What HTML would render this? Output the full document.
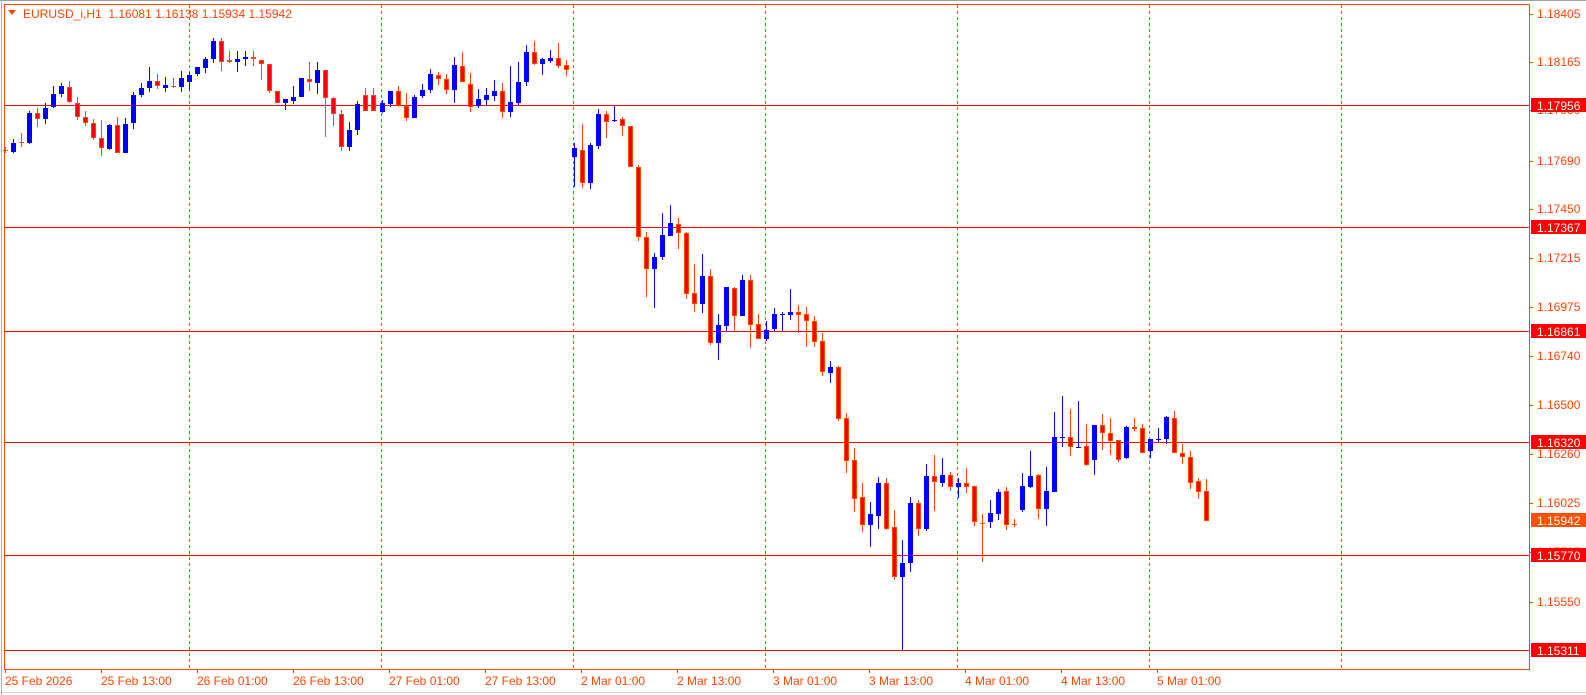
<!DOCTYPE html>
<html><head><meta charset="utf-8">
<style>
html,body{margin:0;padding:0;background:#fff;}
body{width:1586px;height:695px;overflow:hidden;position:relative;font-family:"Liberation Sans",sans-serif;}
svg{position:absolute;left:0;top:0;}
</style></head>
<body>
<svg id="c" width="1586" height="695" xmlns="http://www.w3.org/2000/svg" font-family="Liberation Sans, sans-serif" font-size="12">
<rect x="0" y="0" width="1586" height="695" fill="#fff"/>
<line x1="0" y1="0.5" x2="1586" y2="0.5" stroke="#a0a0a0"/>
<line x1="1.5" y1="0" x2="1.5" y2="695" stroke="#b0b0b0"/>
<line x1="0" y1="692.5" x2="1586" y2="692.5" stroke="#d8d8d8"/>
<g id="grid" stroke="#ff4500" stroke-dasharray="3,3"></g>
<g id="hl" stroke="#ff0000"></g>
<g id="cd"></g>
<rect x="4.5" y="4.5" width="1525" height="665" fill="none" stroke="#ff4500"/>
<g id="ax" fill="#ff4500"></g>
<path d="M8 10 L16 10 L12 15 Z" fill="#ff4500"/>
<text x="23" y="18" fill="#ff4500">EURUSD_i,H1&#160;&#160;1.16081 1.16138 1.15934 1.15942</text>
</svg>
<script>
var NS="http://www.w3.org/2000/svg";
function el(p,t,a,txt){var e=document.createElementNS(NS,t);for(var k in a)e.setAttribute(k,a[k]);if(txt)e.textContent=txt;p.appendChild(e);return e;}
var g=document.getElementById('grid');
[189,381,573,765,957,1149,1341].forEach(function(x){el(g,'line',{x1:x+.5,y1:5,x2:x+.5,y2:669});});
var hl=document.getElementById('hl');
[105,227,331,442,555,650].forEach(function(y){el(hl,'line',{x1:5,y1:y+.5,x2:1529,y2:y+.5});});
var ax=document.getElementById('ax');
var ticks=[["1.18405",14],["1.18165",62],["1.17930",110],["1.17690",161],["1.17450",209],["1.17215",258],["1.16975",307],["1.16740",356],["1.16500",405],["1.16260",454],["1.16025",503],["1.15785",552],["1.15550",602]];
ticks.forEach(function(t){el(ax,'rect',{x:1530,y:t[1],width:3,height:1});el(ax,'text',{x:1537,y:t[1]+4},t[0]);});
var boxes=[["1.17956",105,"#ff0000"],["1.17367",227,"#ff0000"],["1.16861",331,"#ff0000"],["1.16320",442,"#ff0000"],["1.15942",520,"#ff5000"],["1.15770",555,"#ff0000"],["1.15311",650,"#ff0000"]];
boxes.forEach(function(b){el(ax,'rect',{x:1531,y:b[1]-7,width:55,height:14,fill:b[2]});el(ax,'text',{x:1537,y:b[1]+5,fill:'#fff'},b[0]);});
var dates=["25 Feb 2026","25 Feb 13:00","26 Feb 01:00","26 Feb 13:00","27 Feb 01:00","27 Feb 13:00","2 Mar 01:00","2 Mar 13:00","3 Mar 01:00","3 Mar 13:00","4 Mar 01:00","4 Mar 13:00","5 Mar 01:00"];
dates.forEach(function(d,i){var x=5+96*i;el(ax,'rect',{x:x,y:670,width:1,height:3});el(ax,'text',{x:x,y:685},d);});
var z1=[["O",150,150,147,153],["B",143,152,139,153],["O",142,142,133,147],["B",113,143,111,144],["O",113,119,108,127],["B",108,119,103,124],["B",94,107,86,108],["B",86,94,83,97],["O",87,102,81,103],["O",103,117,97,120],["O",117,123,111,126],["O",123,138,119,140],["O",138,148,120,156],["B",125,149,124,150],["O",125,153,117,153],["B",124,153,118,153],["B",95,123,92,129],["B",88,95,83,97],["B",81,88,67,92],["O",81,86,74,89],["B",85,88,77,92],["O",86,86,78,88],["B",78,87,71,92],["B",75,82,72,90],["B",67,74,67,76],["B",59,68,57,73],["B",41,59,38,63],["O",41,62,38,71],["O",60,62,51,63],["B",59,62,51,72],["B",57,59,51,66],["O",57,59,51,66],["O",60,64,60,80],["O",64,91,64,93],["O",91,103,91,103],["B",99,103,99,110],["B",97,101,86,104],["B",78,97,78,97],["O",79,82,62,91],["B",70,83,62,94],["O",70,98,70,137],["O",98,114,97,126],["O",114,147,110,151],["B",130,147,122,151],["B",104,130,101,135],["O",95,111,88,111],["O",95,111,88,111]];
var z4=[["B",103,112,100,113],["B",91,104,91,107],["O",91,106,86,107],["O",106,118,93,121],["B",97,118,95,118],["B",90,96,84,98],["B",74,90,69,93],["O",75,79,72,85],["O",79,90,74,94],["B",65,90,57,103],["O",66,82,52,82],["O",84,107,73,112],["B",99,106,89,108],["B",95,100,88,106],["B",91,96,80,101],["O",91,112,83,118],["B",102,112,66,117],["B",82,103,62,105],["B",52,82,45,86],["O",52,64,41,65],["B",59,64,58,75],["B",58,61,50,63],["O",58,66,43,68],["O",65,70,60,76],
["B",148,157,143,187],["O",150,183,124,188],["B",145,183,143,189],["B",114,146,109,149],["O",114,122,111,138],["B",120,120,106,122],["O",119,126,117,136],["O",126,167,126,167],["O",167,237,165,241],["O",237,269,232,297],["B",257,269,253,308],["B",235,257,213,260],["B",223,236,205,236],["O",224,233,218,249],["O",233,294,232,299],["O",293,304,264,312],["B",276,304,254,313],["O",276,343,269,345],["B",325,343,314,360],["B",287,326,287,331],["O",288,316,287,331],["B",280,316,275,316],["O",280,325,275,348],["O",324,339,314,339],["B",330,339,321,341],["B",314,329,308,331],["B",314,314,312,331],["B",312,315,289,320],["O",312,315,305,333],["O",314,321,307,347],["O",321,342,316,347]];
var z5=[["O",341,372,333,376],["B",367,373,361,383],["O",367,419,366,421],["O",418,461,413,473],["O",460,499,448,512],["O",497,525,483,532],["B",514,525,502,547],["B",483,516,477,529],["O",483,529,478,530],["O",527,577,510,580],["B",563,577,540,650],["B",503,563,497,572],["O",503,529,500,536],["B",476,529,464,531],["O",476,482,455,511],["B",475,483,458,487],["O",475,487,472,491],["B",483,487,478,498],["O",483,487,468,493],["O",486,522,486,526],["O",523,523,514,562],["B",513,522,500,528],["B",492,514,489,520],["O",491,525,487,530],["O",524,524,519,527],["B",486,510,473,512],["B",476,487,451,488],["O",475,509,474,519],["B",491,509,467,526],["B",437,492,412,492],["B",437,437,396,447],["O",437,447,409,456],["B",447,447,401,447],["O",446,465,424,466],["B",425,460,425,475],["O",425,433,414,450],["O",433,441,418,455],["O",440,460,440,462],["B",427,458,426,459],["O",427,429,418,431],["O",428,453,424,453],["B",439,451,439,458],["B",439,439,428,442],["B",417,439,416,444],["O",418,453,411,453],["O",453,457,444,464],["O",457,483,451,489],["O",481,492,478,499],["O",491,521,479,521]];
var all=[];
z1.forEach(function(c,i){all.push([5+8*i].concat(c));});
z4.forEach(function(c,i){all.push([381.7+8*i].concat(c));});
z5.forEach(function(c,i){all.push([821.7+8*i].concat(c));});
var cd=document.getElementById('cd');
all.forEach(function(c){
 var x=Math.round(c[0]),col=c[1],bt=c[2],bb=c[3],wt=c[4],wb=c[5];
 var wc=col=="B"?"#0000ff":"#ff4500";
 el(cd,'rect',{x:x,y:wt,width:1,height:Math.max(1,wb-wt),fill:wc});
 if(bb-bt<2){el(cd,'rect',{x:x-2,y:bt,width:5,height:1,fill:wc});}
 else if(col=="B"){el(cd,'rect',{x:x-2,y:bt,width:5,height:bb-bt,fill:"#0000ff"});}
 else{el(cd,'rect',{x:x-2,y:bt,width:5,height:bb-bt,fill:"#ff4500"});el(cd,'rect',{x:x-1,y:bt+1,width:3,height:Math.max(0,bb-bt-2),fill:"#ff0000"});}
});
</script>
</body></html>
